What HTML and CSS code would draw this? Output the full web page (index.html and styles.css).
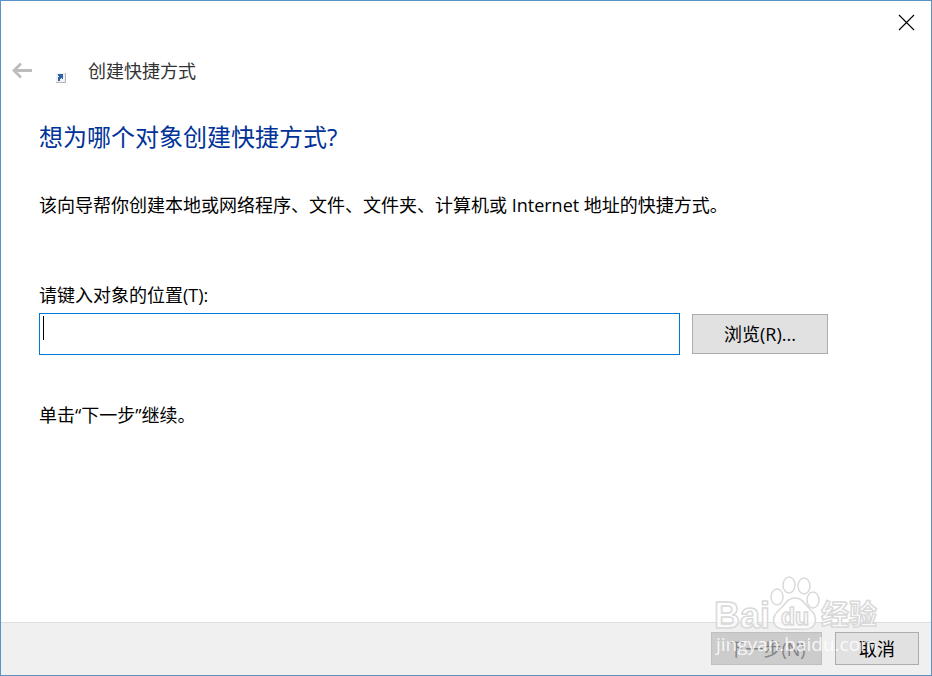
FILE: index.html
```html
<!DOCTYPE html>
<html lang="zh-CN">
<head>
  <meta charset="UTF-8" />
  <meta name="viewport" content="width=device-width, initial-scale=1.0"/>
  <title>创建快捷方式</title>
  <link rel="stylesheet" href="styles.css">
</head>
<body>
  <form class="wizard">
    <div class="titlebar">
      <button type="button" class="close-btn" aria-label="关闭">
        <svg width="17" height="17" viewBox="0 0 17 17"><path d="M1 1L16 16M16 1L1 16" stroke="#000" stroke-width="1.1"/></svg>
      </button>
    </div>
    <header>
      <button type="button" class="back-btn" aria-label="返回" disabled>
        <svg width="22" height="18" viewBox="0 0 22 18" fill="none" stroke="#bdbdbd" stroke-width="2.8"><path d="M21 8.5H3M10 1.5L3 8.5L10 15.5"/></svg>
      </button>
      <svg class="shortcut-icon" width="10" height="10" viewBox="0 0 10 10">
        <path d="M0 0H9V9H0Z" fill="#f1f1f1"/>
        <path d="M9 0H10V10H0V9H9Z" fill="#b5b5b5"/>
        <path d="M2 1H7V6H6V5H5V6H4V8H2V4H3V3H2Z" fill="#2c62a6"/>
      </svg>
      <span class="wizard-name">创建快捷方式</span>
    </header>
    <main>
      <h1>想为哪个对象创建快捷方式?</h1>
      <p class="intro">该向导帮你创建本地或网络程序、文件、文件夹、计算机或 Internet 地址的快捷方式。</p>
      <label for="location">请键入对象的位置(T):</label>
      <div class="location-row">
        <div class="location-field">
          <input type="text" id="location" autocomplete="off"/>
          <span class="caret"></span>
        </div>
        <button type="button" class="btn browse-btn">浏览(R)...</button>
      </div>
      <p class="hint">单击“下一步”继续。</p>
    </main>
    <footer>
      <button type="submit" class="btn next-btn" disabled>下一步(N)</button>
      <button type="button" class="btn cancel-btn">取消</button>
      <svg class="watermark" width="172" height="90" viewBox="0 0 172 90">
        <g class="mark">
          <text x="3" y="57" class="mark-latin">Bai</text>
          <ellipse cx="66" cy="26" rx="6" ry="8"/>
          <ellipse cx="78" cy="14" rx="6" ry="8"/>
          <ellipse cx="93" cy="15" rx="6" ry="8"/>
          <ellipse cx="102" cy="29" rx="6" ry="8"/>
          <path d="M84 27C91 27 93 32 98 37C103 42 106 46 104 52C102 58 96 59 84 58C72 59 65 58 63 52C61 46 65 42 70 37C75 32 77 27 84 27Z"/>
          <text x="70" y="54" class="mark-du">du</text>
          <text x="110" y="54" class="mark-cjk">经验</text>
        </g>
        <text x="5" y="80" class="mark-url">jingyan.baidu.com</text>
      </svg>
    </footer>
  </form>
</body>
</html>
```

FILE: styles.css
```css
* { box-sizing: border-box; }
body {
  margin: 0;
  font-family: "Open Sans", "Noto Sans CJK SC", sans-serif;
  font-size: 18px;
  line-height: 24px;
  background: #fff;
  color: #000;
}
button, input {
  font: inherit;
  color: inherit;
}
h1, p { margin: 0; }
.wizard {
  display: flex;
  flex-direction: column;
  min-height: 100vh;
  border: 1px solid #5a93c6;
}
.titlebar {
  display: flex;
  justify-content: flex-end;
  padding: 13px 16px 0;
}
.close-btn, .back-btn {
  display: flex;
  padding: 0;
  border: none;
  background: none;
}
header {
  display: flex;
  align-items: center;
  padding: 28px 10px 0;
}
.shortcut-icon {
  align-self: flex-end;
  margin: 0 22px 0 23px;
}
.wizard-name { color: #333; }
main {
  flex: 1;
  padding: 38px 103px 40px 38px;
}
h1 {
  font-size: 24px;
  line-height: 32px;
  font-weight: 400;
  color: #003399;
}
.intro { margin-top: 40px; }
label {
  display: block;
  margin-top: 66px;
}
.location-row {
  display: flex;
  align-items: center;
  gap: 12px;
  margin-top: 6px;
}
.location-field {
  position: relative;
  flex: 1;
}
#location {
  display: block;
  width: 100%;
  height: 42px;
  padding: 2px 4px 14px;
  border: 1px solid #0078d7;
  background: #fff;
  outline: none;
}
.caret {
  position: absolute;
  left: 4px;
  top: 3px;
  width: 1px;
  height: 24px;
  background: #000;
}
.btn {
  border: 1px solid #adadad;
  background: #e1e1e1;
  padding: 0;
}
.browse-btn {
  width: 136px;
  height: 40px;
}
.hint { margin-top: 48px; }
footer {
  position: relative;
  display: flex;
  justify-content: flex-end;
  gap: 13px;
  padding: 9px 12px 10px;
  border-top: 1px solid #dfdfdf;
  background: #f0f0f0;
}
.next-btn {
  width: 111px;
  height: 33px;
  border-color: #bfbfbf;
  background: #ccc;
  color: #838383;
}
.cancel-btn {
  width: 84px;
  height: 33px;
}
.watermark {
  position: absolute;
  right: 48px;
  bottom: 14px;
  pointer-events: none;
}
.mark {
  fill: #fff;
  fill-opacity: 0.7;
  stroke: #d9d9d9;
  stroke-width: 1.5;
}
.mark-latin {
  font: bold 36px "Liberation Sans", sans-serif;
}
.mark-du {
  font: bold 23px "Liberation Sans", sans-serif;
}
.mark-cjk {
  font: bold 28px "Noto Sans CJK SC", sans-serif;
}
.mark-url {
  font: 19px "Open Sans", sans-serif;
  fill: #fff;
  fill-opacity: 0.85;
}
```
